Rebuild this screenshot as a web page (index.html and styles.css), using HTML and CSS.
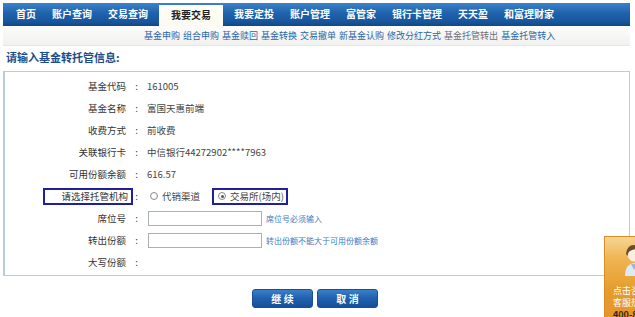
FILE: index.html
```html
<!DOCTYPE html>
<html lang="zh-CN">
<head>
<meta charset="utf-8">
<title>基金转托管</title>
<link rel="stylesheet" href="styles.css">
</head>
<body>
<div class="page">
  <div class="nav">
    <a class="nav-item">首页</a>
    <a class="nav-item">账户查询</a>
    <a class="nav-item">交易查询</a>
    <a class="nav-item active">我要交易</a>
    <a class="nav-item">我要定投</a>
    <a class="nav-item">账户管理</a>
    <a class="nav-item">富管家</a>
    <a class="nav-item">银行卡管理</a>
    <a class="nav-item">天天盈</a>
    <a class="nav-item">和富理财家</a>
  </div>
  <div class="subnav">
    <a>基金申购</a>
    <a>组合申购</a>
    <a>基金赎回</a>
    <a>基金转换</a>
    <a>交易撤单</a>
    <a>新基金认购</a>
    <a>修改分红方式</a>
    <a class="current">基金托管转出</a>
    <a>基金托管转入</a>
  </div>
  <h2 class="title">请输入基金转托管信息:</h2>
  <div class="form-box">
    <div class="row"><div class="label">基金代码</div><div class="colon">:</div><div class="value">161005</div></div>
    <div class="row"><div class="label">基金名称</div><div class="colon">:</div><div class="value">富国天惠前端</div></div>
    <div class="row"><div class="label">收费方式</div><div class="colon">:</div><div class="value">前收费</div></div>
    <div class="row"><div class="label">关联银行卡</div><div class="colon">:</div><div class="value">中信银行44272902****7963</div></div>
    <div class="row"><div class="label">可用份额余额</div><div class="colon">:</div><div class="value">616.57</div></div>
    <div class="row"><div class="label"><span class="mark mark-label">请选择托管机构</span></div><div class="colon">:</div>
      <div class="value">
        <span class="radio"></span><span class="radio-text">代销渠道</span>
        <span class="mark mark-radio"><span class="radio checked"></span><span class="radio-text">交易所(场内)</span></span>
      </div>
    </div>
    <div class="row"><div class="label">席位号</div><div class="colon">:</div><div class="value"><span class="input"></span><span class="hint">席位号必须输入</span></div></div>
    <div class="row"><div class="label">转出份额</div><div class="colon">:</div><div class="value"><span class="input"></span><span class="hint">转出份额不能大于可用份额余额</span></div></div>
    <div class="row"><div class="label">大写份额</div><div class="colon">:</div><div class="value"></div></div>
  </div>
  <div class="actions">
    <button class="btn">继 续</button>
    <button class="btn">取 消</button>
  </div>
</div>
<div class="service">
  <svg class="avatar" width="16" height="36" viewBox="0 0 16 36">
    <ellipse cx="12" cy="12" rx="6.5" ry="7.5" fill="#fbeedd"/>
    <path d="M4 12 Q5 3 12 3 Q18 3 19 8 L19 10 Q14 5 8 9 Q6 10 5.5 14 Z" fill="#6b4a2a"/>
    <path d="M3 34 Q3 22 12 21 Q20 22 20 34 Z" fill="#dfe9f5"/>
    <path d="M9 22 L12 28 L15 22" fill="#9fb7d6"/>
  </svg>
  <div class="service-text">点击咨询</div>
  <div class="service-text">客服热线</div>
  <div class="service-tel">400-888</div>
</div>
</body>
</html>
```
FILE: styles.css
```css
* { box-sizing: border-box; }
body {
  margin: 0;
  background: #ffffff;
  font-family: "Noto Sans CJK SC", "Microsoft YaHei", sans-serif;
  color: #333333;
}
.page {
  margin: 3px 5px 0 3px;
  width: 627px;
}
.nav {
  height: 23px;
  display: flex;
  align-items: flex-end;
  padding-left: 5px;
  background: linear-gradient(#3a82cc 0%, #1f62ab 45%, #17569e 80%, #114884 100%);
}
.nav-item {
  padding: 0 8px;
  height: 23px;
  line-height: 22px;
  color: #ffffff;
  font-size: 10px;
  font-weight: bold;
  white-space: nowrap;
}
.nav-item.active {
  margin: 0 3px;
  padding: 0 12px;
  height: 21px;
  line-height: 20px;
  color: #1f1f1f;
  background: linear-gradient(#fffef6, #fbfaf0);
}
.subnav {
  height: 20px;
  display: flex;
  gap: 3px;
  padding-left: 141px;
  align-items: center;
  background: linear-gradient(#fcfcfa, #f1f1ef);
  border-bottom: 1px solid #e6e6e6;
  font-size: 9px;
  line-height: 12px;
}
.subnav a {
  color: #2a66a8;
  white-space: nowrap;
}
.subnav a.current {
  color: #6a6f78;
}
.title {
  margin: 4px 0 7px 3px;
  font-size: 11px;
  line-height: 14px;
  font-weight: bold;
  color: #1c4d8a;
}
.form-box {
  border: 1px solid #b8ccdb;
  border-left: 2px solid #b8ccdb;
  padding: 3px 0 2px;
}
.row {
  display: grid;
  grid-template-columns: 121px 21px 1fr;
  height: 22px;
  align-items: center;
  font-size: 9.5px;
  line-height: 13px;
}
.label {
  text-align: right;
  color: #333333;
  white-space: nowrap;
}
.colon {
  text-align: center;
  color: #333333;
}
.value {
  display: flex;
  align-items: center;
  color: #444444;
  white-space: nowrap;
}
.mark {
  display: inline-flex;
  align-items: center;
  border: 2px solid #20209c;
  height: 17px;
}
.mark-label {
  margin-right: -7px;
  padding: 0 3px 0 16px;
}
.mark-radio {
  margin-left: 12px;
  padding: 0 2px 0 3px;
}
.radio {
  display: inline-block;
  width: 8px;
  height: 8px;
  border-radius: 50%;
  border: 1px solid #8c8c8c;
  background: radial-gradient(circle, #ffffff 40%, #e8e8e8 100%);
  margin-left: 3px;
  margin-right: 4px;
  position: relative;
}
.mark-radio .radio { margin-left: 1px; }
.radio.checked::after {
  content: "";
  position: absolute;
  left: 1.5px;
  top: 1.5px;
  width: 3px;
  height: 3px;
  border-radius: 50%;
  background: #4a5a4a;
}
.radio-text {
  color: #444444;
}
.input {
  display: inline-block;
  width: 114px;
  height: 15px;
  margin-left: 1px;
  border: 1px solid #a8b0b8;
  background: #ffffff;
}
.hint {
  margin-left: 4px;
  font-size: 8px;
  color: #3d7bc2;
}
.actions {
  display: flex;
  gap: 4px;
  padding-left: 249px;
  margin-top: 13px;
}
.btn {
  width: 61px;
  height: 19px;
  padding: 0;
  border: 1px solid #1b4f93;
  border-radius: 3px;
  background: linear-gradient(#3b7fc9 0%, #1f60ad 50%, #164f99 100%);
  color: #ffffff;
  font-family: "Noto Sans CJK SC", sans-serif;
  font-size: 10px;
  font-weight: bold;
  line-height: 17px;
}
.service {
  position: absolute;
  left: 604px;
  top: 236px;
  width: 40px;
  height: 90px;
  border: 1px solid #d88d25;
  background: linear-gradient(#f6d593 0%, #efb453 25%, #e79c2c 60%, #e3942a 100%);
  padding: 40px 0 0 8px;
  overflow: hidden;
}
.avatar {
  position: absolute;
  left: 17px;
  top: 5px;
}
.service-text {
  color: #ffffff;
  font-size: 9px;
  line-height: 12px;
  white-space: nowrap;
}
.service-text:first-of-type { margin-top: 8px; }
.service-tel {
  color: #3a2a10;
  font-size: 9px;
  font-weight: bold;
  line-height: 12px;
  white-space: nowrap;
}
```
